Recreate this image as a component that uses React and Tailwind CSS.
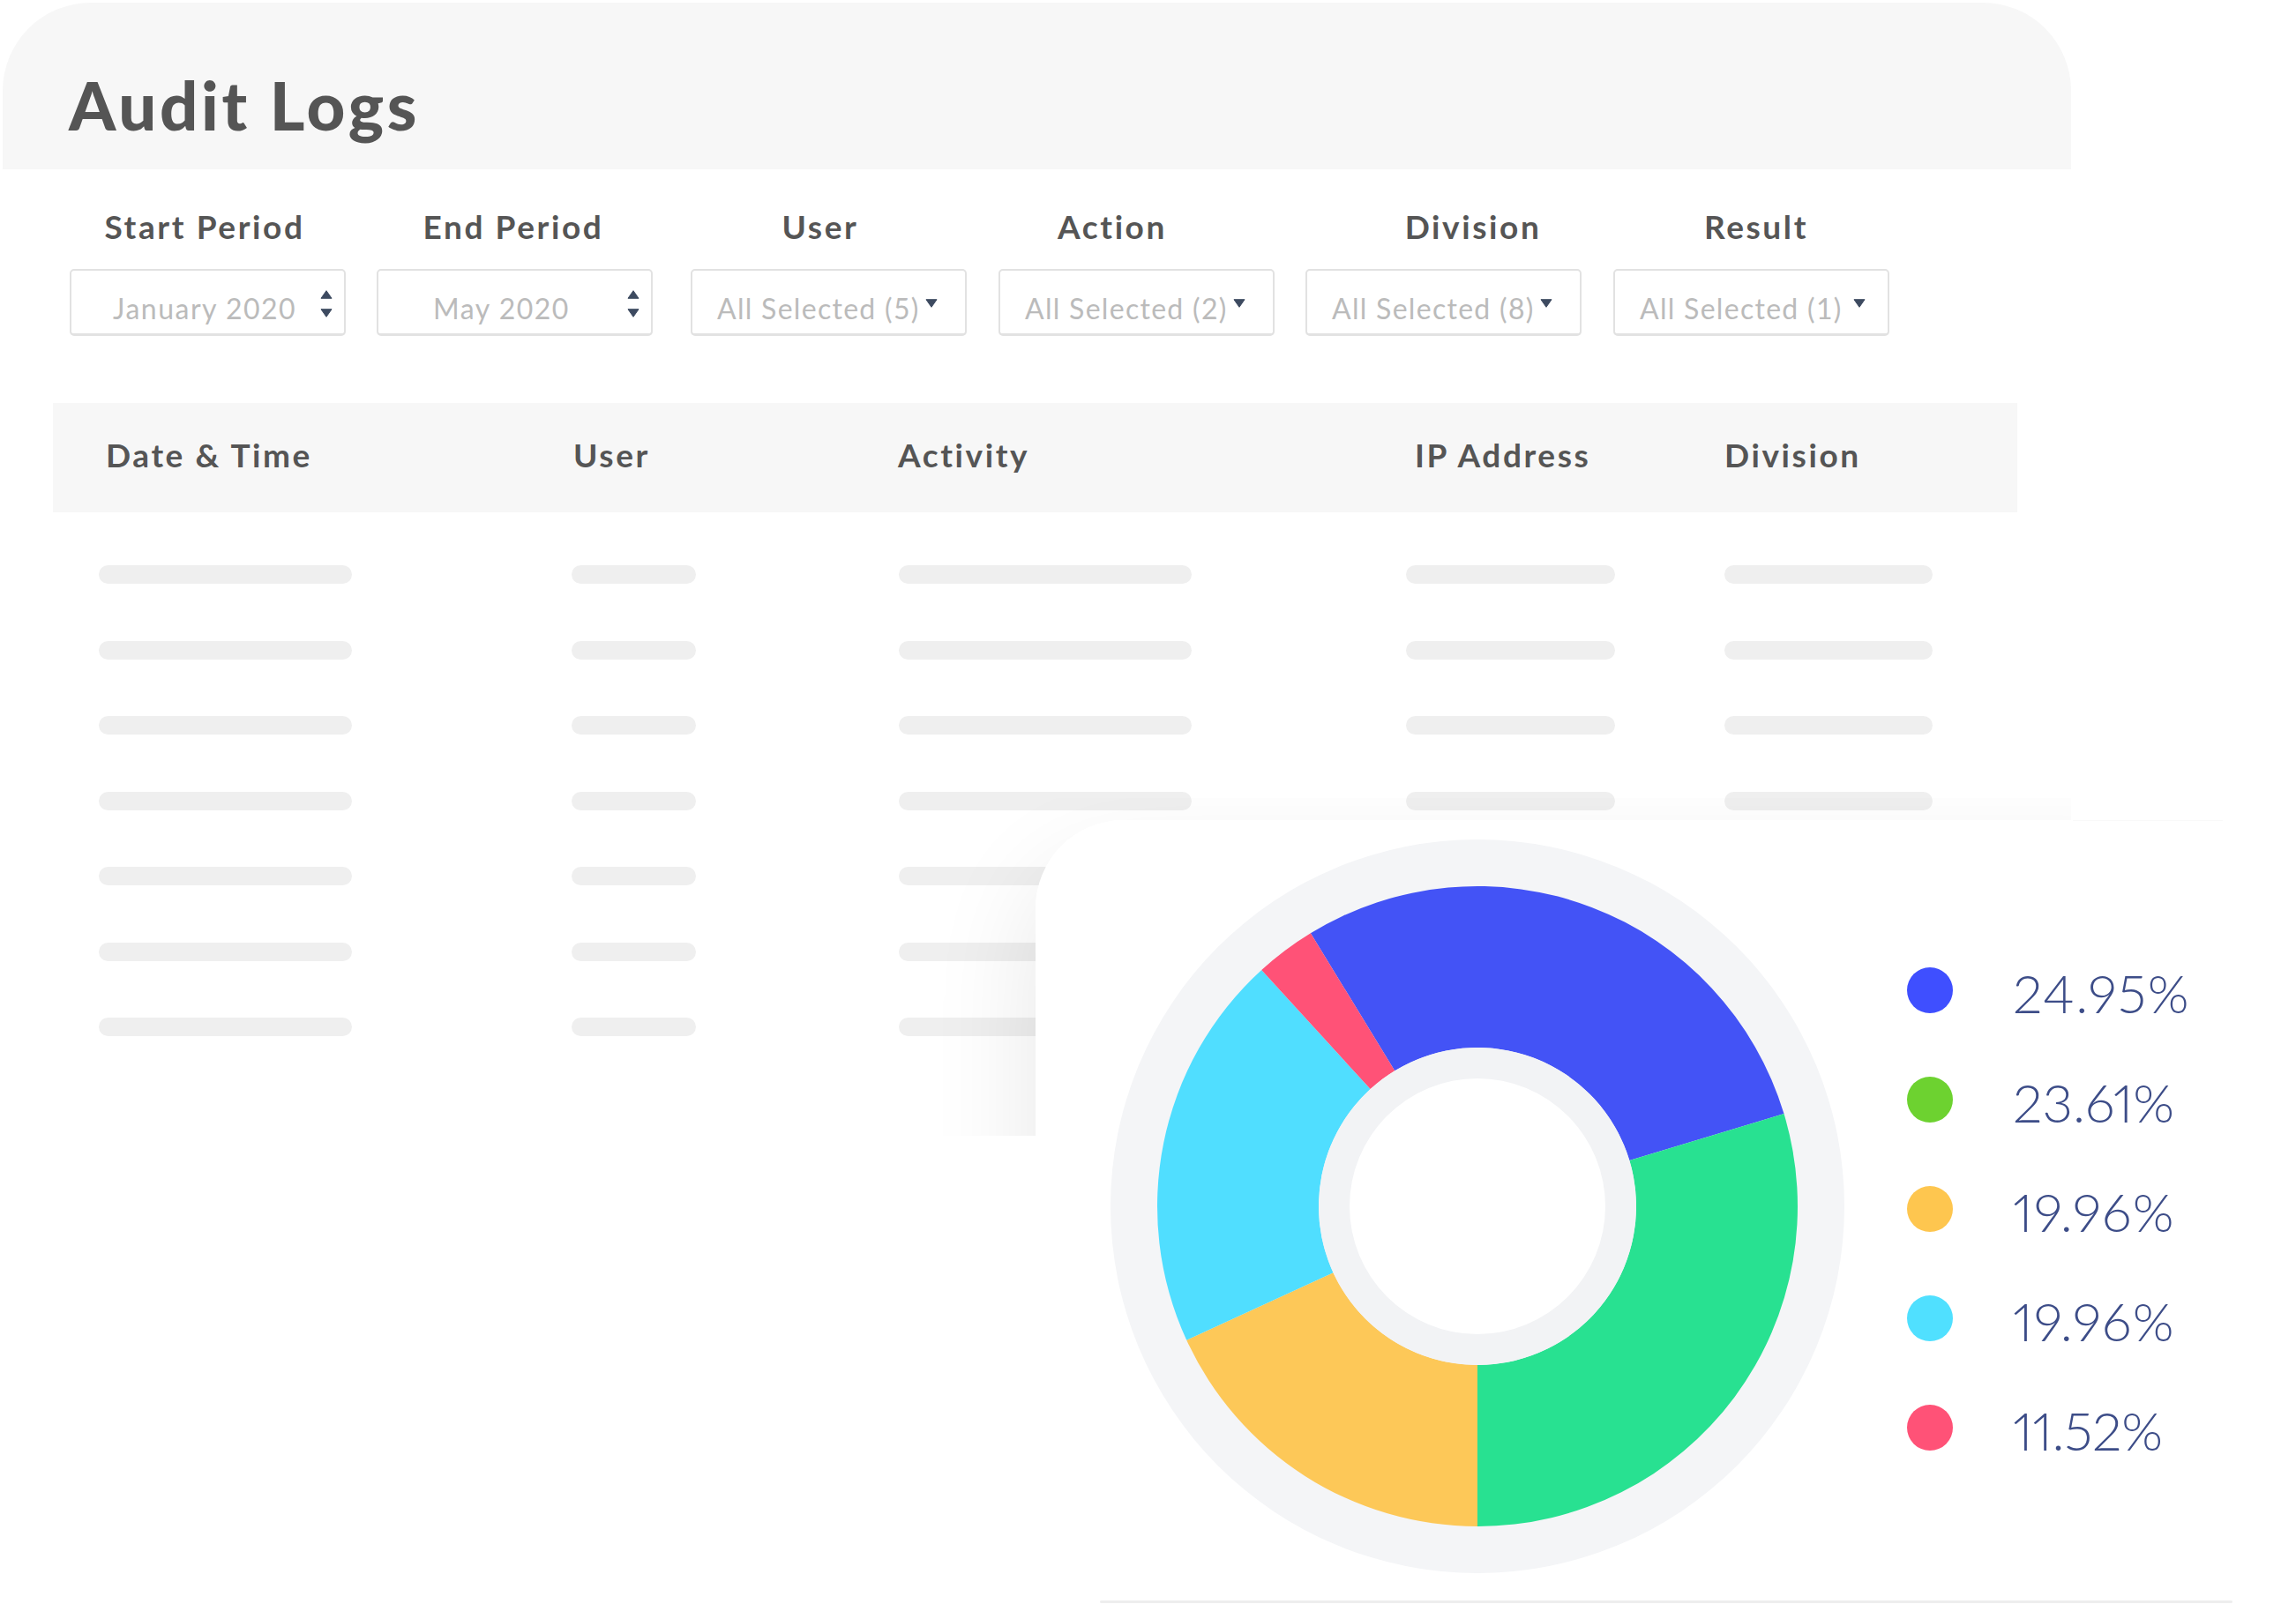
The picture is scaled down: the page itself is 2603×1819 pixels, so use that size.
const FONT = "font-['Lato','Liberation_Sans',sans-serif]";

const FILTERS = [
  { label: "Start Period", labelBox: "ml-[79px]" },
  { label: "End Period", labelBox: "ml-[50px]" },
  { label: "User", labelBox: "ml-[48px]" },
  { label: "Action", labelBox: "ml-[31px]" },
  { label: "Division", labelBox: "ml-[109px]" },
  { label: "Result", labelBox: "ml-[21px]" },
];

const COLUMNS = ["Date & Time", "User", "Activity", "IP Address", "Division"];

const SEGMENTS = [
  { from: 328.6, to: 433.2, fill: "#4353f6" },
  { from: 73.2, to: 180, fill: "#28e191" },
  { from: 180, to: 245.3, fill: "#fdc858" },
  { from: 245.3, to: 317.6, fill: "#50deff" },
  { from: 317.6, to: 328.6, fill: "#ff5277" },
];

const LEGEND = [
  { value: "24.95%", dot: "bg-[#3f4fff]", track: "tracking-[1.5px]" },
  { value: "23.61%", dot: "bg-[#6dd230]", track: "tracking-normal" },
  { value: "19.96%", dot: "bg-[#fec64f]", track: "tracking-[1.5px]" },
  { value: "19.96%", dot: "bg-[#50e0ff]", track: "tracking-[1.5px]" },
  { value: "11.52%", dot: "bg-[#ff5277]", track: "tracking-[-0.3px]" },
];

function Triangle({ down, className }) {
  return (
    <svg width="14" height="10" viewBox="0 0 14 10" className={className}>
      <path d={down ? "M1 .7H13L7 9.3Z" : "M1 9.3H13L7 .7Z"} fill="#3d4a60" stroke="#3d4a60" strokeLinejoin="round" />
    </svg>
  );
}

function Stepper({ text, textPad }) {
  return (
    <div className="w-[313px] h-[76px] shrink-0 relative bg-white border-2 border-[#e2e2e2] border-b-[3px] rounded-[5px]">
      <span className={`absolute top-[23px] ${textPad} text-[32px] leading-[40px] tracking-[1.5px] font-normal text-[#bbbbbb] whitespace-nowrap`}>{text}</span>
      <div className="absolute right-[13px] top-[22px] flex flex-col gap-[11px]">
        <Triangle />
        <Triangle down />
      </div>
    </div>
  );
}

function Select({ text, caret }) {
  return (
    <div className="w-[313px] h-[76px] shrink-0 relative bg-white border-2 border-[#e2e2e2] border-b-[3px] rounded-[5px]">
      <span className="absolute top-[23px] left-[28px] text-[32px] leading-[40px] tracking-[1.3px] font-normal text-[#bbbbbb] whitespace-nowrap">{text}</span>
      <Triangle down className={`absolute top-[32px] ${caret}`} />
    </div>
  );
}

function SkeletonRow() {
  return (
    <div className="flex ml-[109px]">
      <div className="w-[287px] h-[21px] rounded-full bg-[#efefef]" />
      <div className="w-[141px] h-[21px] rounded-full bg-[#efefef] ml-[249px]" />
      <div className="w-[332px] h-[21px] rounded-full bg-[#efefef] ml-[230px]" />
      <div className="w-[237px] h-[21px] rounded-full bg-[#efefef] ml-[243px]" />
      <div className="w-[236px] h-[21px] rounded-full bg-[#efefef] ml-[124px]" />
    </div>
  );
}

function polar(r, deg) {
  const a = (deg * Math.PI) / 180;
  return `${416 + r * Math.sin(a)} ${416 - r * Math.cos(a)}`;
}

function slice({ from, to }) {
  const big = to - from > 180 ? 1 : 0;
  return `M${polar(180, from)}L${polar(363, from)}A363 363 0 ${big} 1 ${polar(363, to)}L${polar(180, to)}A180 180 0 ${big} 0 ${polar(180, from)}Z`;
}

function Donut() {
  return (
    <svg width="832" height="832" viewBox="0 0 832 832" className="shrink-0">
      <circle cx="416" cy="416" r="416" fill="#f4f5f7" />
      {SEGMENTS.map((s) => (
        <path key={s.fill} d={slice(s)} fill={s.fill} />
      ))}
      <circle cx="416" cy="416" r="180" fill="#f2f3f5" />
      <circle cx="416" cy="416" r="145" fill="#ffffff" />
    </svg>
  );
}

export default function App() {
  return (
    <div className={`${FONT} relative w-[2603px] h-[1819px] bg-white overflow-hidden pt-[3px] pl-[3px]`}>
      <div className="w-[2345px] h-[189px] bg-[#f7f7f7] rounded-t-[100px] pl-[75px] pt-[70px]">
        <h1 className="text-[76px] leading-[92px] font-black text-[#555555] tracking-[3.7px]">Audit Logs</h1>
      </div>

      <div className="flex mt-[43px] text-[37px] leading-[44px] font-bold text-[#555555] tracking-[2.6px]">
        {FILTERS.map((f) => (
          <div key={f.label} className={`w-[300px] shrink-0 text-center ${f.labelBox}`}>{f.label}</div>
        ))}
      </div>

      <div className="flex mt-[26px] ml-[76px]">
        <Stepper text="January 2020" textPad="left-[47px]" />
        <div className="ml-[35px]"><Stepper text="May 2020" textPad="left-[62px]" /></div>
        <div className="ml-[43px]"><Select text="All Selected (5)" caret="left-[264px]" /></div>
        <div className="ml-[36px]"><Select text="All Selected (2)" caret="left-[264px]" /></div>
        <div className="ml-[35px]"><Select text="All Selected (8)" caret="left-[264px]" /></div>
        <div className="ml-[36px]"><Select text="All Selected (1)" caret="left-[270px]" /></div>
      </div>

      <div className="ml-[57px] mt-[76px] w-[2227px] h-[124px] bg-[#f7f7f7] pl-[60px] pb-[6px] grid grid-cols-[530px_368px_586px_351px_auto] items-center text-[37px] leading-[44px] font-bold text-[#555555] tracking-[2.6px]">
        {COLUMNS.map((c) => (
          <div key={c}>{c}</div>
        ))}
      </div>

      <div className="mt-[60px] flex flex-col gap-[64.5px]">
        {Array.from({ length: 7 }, (_, i) => (
          <SkeletonRow key={i} />
        ))}
      </div>

      {/* shadow of the chart card, cut off sharply as in the picture */}
      <div className="absolute left-[1000px] top-[905px] w-[1348px] h-[383px] overflow-hidden">
        <div className="absolute left-[174px] top-[25px] w-[1366px] h-[884px] rounded-[100px] shadow-[-6px_50px_120px_rgba(0,0,0,0.09)]" />
      </div>

      <div className="absolute left-[1174px] top-[930px] w-[1366px] h-[885px] bg-white rounded-[100px] flex pl-[85px] pt-[22px]">
        <Donut />
        <div className="ml-[71px] mt-[145px] flex flex-col gap-[72px]">
          {LEGEND.map((l, i) => (
            <div key={i} className="flex items-center h-[52px]">
              <div className={`w-[52px] h-[52px] rounded-full shrink-0 ${l.dot}`} />
              <span className={`ml-[68px] mt-[5px] text-[60px] leading-[52px] font-light text-[#3d4d88] whitespace-nowrap proportional-nums ${l.track}`}>{l.value}</span>
            </div>
          ))}
        </div>
      </div>

      <div className="absolute left-[1247px] top-[1815px] w-[1284px] h-[3px] rounded-full bg-[#eeeeee]" />
      <div className="absolute left-[2350px] top-[930px] w-[170px] h-px bg-[#f9f9f9]" />
    </div>
  );
}
